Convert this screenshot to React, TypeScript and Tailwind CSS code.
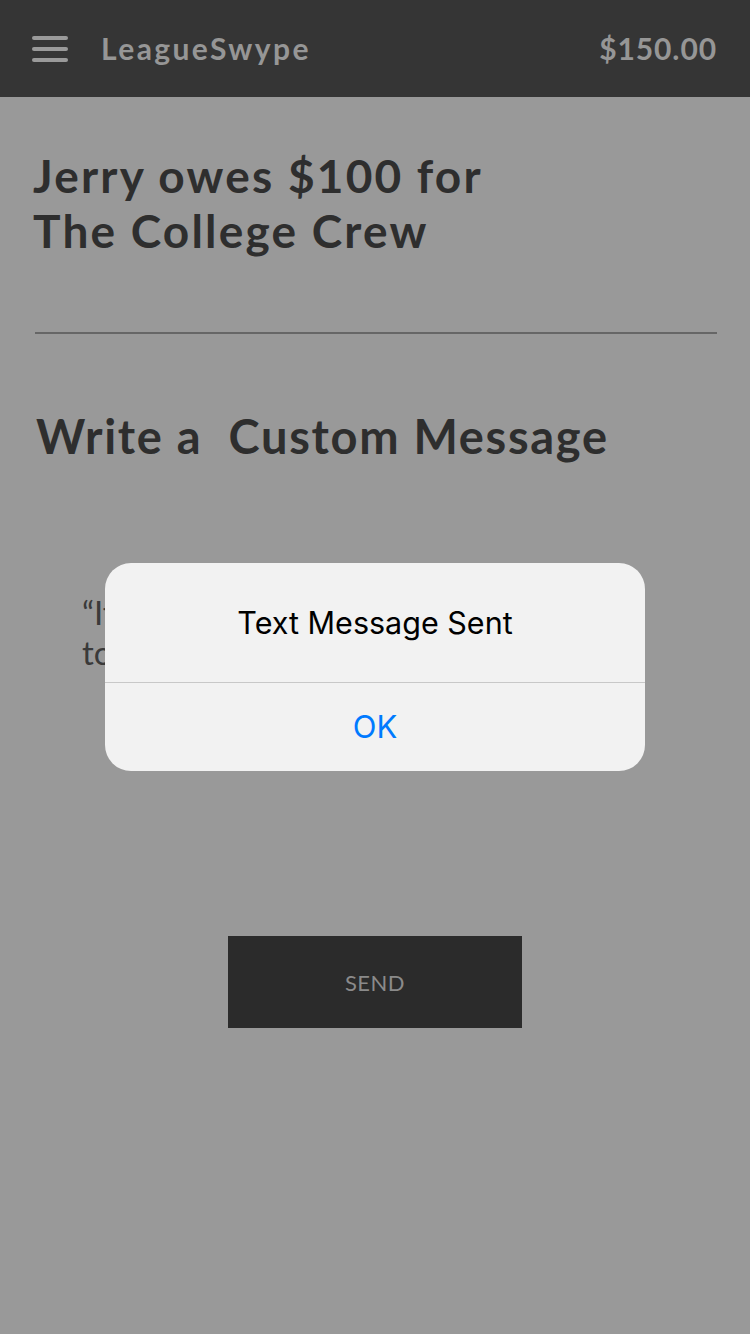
import React from 'react';

export default function App() {
  return (
    <div className="relative min-h-[1334px] bg-[#999999] font-['Lato',sans-serif]">
      <header className="flex h-[97px] items-center justify-between bg-[#353535] pl-[32px] pr-[33px]">
        <div className="flex items-center gap-[33px]">
          <div className="flex w-[36px] flex-col gap-[7px]">
            <span className="h-[4px] rounded-full bg-[#9a9a9a]" />
            <span className="h-[4px] rounded-full bg-[#9a9a9a]" />
            <span className="h-[4px] rounded-full bg-[#9a9a9a]" />
          </div>
          <span className="text-[30px] font-bold tracking-[2.4px] text-[#969696]">LeagueSwype</span>
        </div>
        <span className="text-[30px] font-bold tracking-[0.9px] text-[#969696]">$150.00</span>
      </header>

      <main className="px-[33px]">
        <h1 className="mt-[51px] text-[46px] font-bold leading-[55px] tracking-[2.2px] text-[#2e2e2e]">
          Jerry owes $100 for
          <br />
          The College Crew
        </h1>
        <div className="ml-[2px] mt-[74px] h-[2px] bg-[#666666]" />
        <h2 className="mt-[74px] whitespace-pre pl-[3px] text-[47px] font-bold leading-[56px] tracking-[1.7px] text-[#2e2e2e]">
          Write a  Custom Message
        </h2>
        <p className="mt-[128px] pl-[49px] text-[33px] leading-[40px] text-[#3a3a3a]">
          “It's time for you
          <br />
          to pay up, Jerry!”
        </p>
        <div className="mt-[264px] flex justify-center">
          <button className="flex h-[92px] w-[294px] items-center justify-center bg-[#2b2b2b] text-[22px] tracking-[0.5px] text-[#8a8a8a]">
            SEND
          </button>
        </div>
      </main>

      <div className="absolute left-[105px] top-[563px] flex h-[208px] w-[540px] flex-col overflow-hidden rounded-[26px] bg-[#f2f2f2] font-['Inter',sans-serif]">
        <div className="flex h-[120px] items-center justify-center border-b border-[#c8c8c8] text-[30.5px] text-black">
          Text Message Sent
        </div>
        <div className="flex flex-1 items-center justify-center text-[31px] text-[#007aff]">OK</div>
      </div>
    </div>
  );
}
